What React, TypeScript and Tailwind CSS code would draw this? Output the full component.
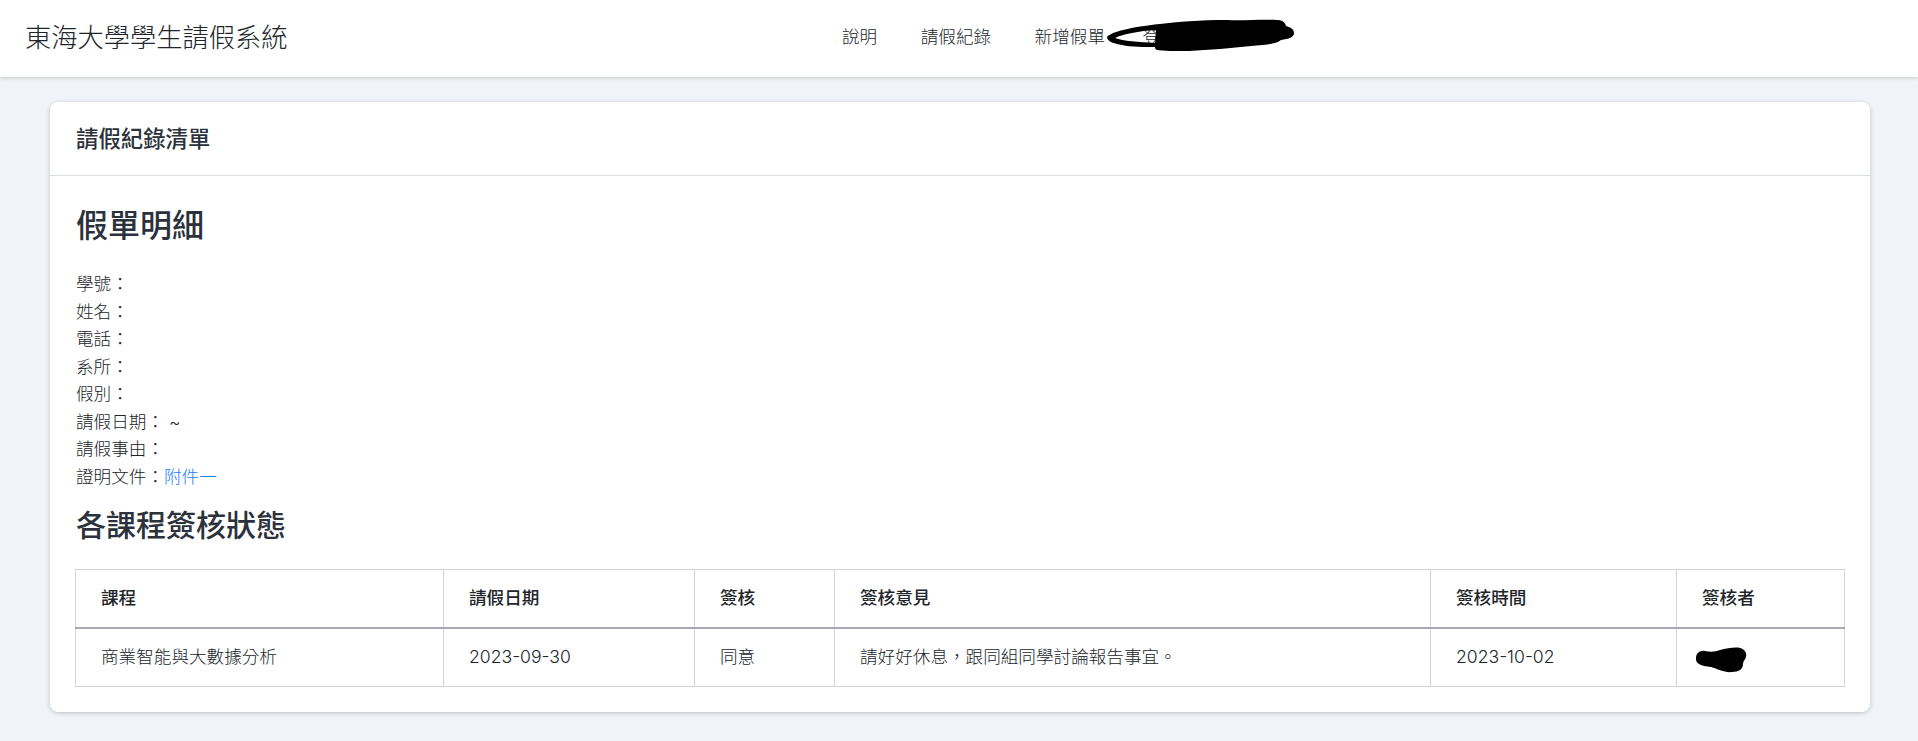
const fontStack = "font-['Inter','Noto_Sans_CJK_TC',sans-serif]";

const columns = [
  { title: '課程', width: 'w-[368px]' },
  { title: '請假日期', width: 'w-[251px]' },
  { title: '簽核', width: 'w-[140px]' },
  { title: '簽核意見', width: 'w-[596px]' },
  { title: '簽核時間', width: 'w-[246px]' },
  { title: '簽核者', width: 'w-[168px]' },
];

const details = ['學號：', '姓名：', '電話：', '系所：', '假別：', '請假日期： ~', '請假事由：'];

function NavScribble() {
  return (
    <svg className="absolute left-[1107px] top-[19px]" width="187" height="33" viewBox="0 0 187 33" fill="none">
      <path
        fillRule="evenodd"
        d="M0 18C4 13 24 8 53 5 70 3 93 1 120 1c16 1 34-1 50 0 5 0 8 2 9 6 4 1 8 3 8 7 0 4-5 6-13 7-4 4-16 5-30 6-20 2-42 4-62 5-13 0-26 0-32-1-2-1-2-2-2-3-10 0-24 0-33-2C3 24 0 21 0 18zM8 19c8 3 24 4 40 5l1-13C32 12 16 15 8 19z"
        fill="#000"
      />
    </svg>
  );
}

function SignerScribble() {
  return (
    <svg className="absolute left-[18px] top-[18px]" width="52" height="26" viewBox="0 0 52 26" fill="none">
      <path d="M1 11C1 6 5 3 10 4c5 1 10 1 15-1 7-2 16-3 20-2 5 1 7 6 6 9-1 3-3 4-3 7 0 5-4 8-11 8-7 1-14-3-21-5-5-1-9-1-12-3-2-1-3-3-3-5z" fill="#000" />
    </svg>
  );
}

export default function App() {
  return (
    <div className={`min-h-[741px] bg-[#f0f3f8] text-[17.6px] text-[#212529] ${fontStack}`}>
      <header className="relative flex h-[77px] items-center bg-white pb-[2px] pl-[25px] shadow-[0_1px_4px_rgba(0,0,0,0.18)]">
        <span className="w-[264px] text-[26.25px] font-extralight text-[#212529]">東海大學學生請假系統</span>
        <nav className="ml-[553px] flex gap-[43.5px] font-light">
          <a>說明</a>
          <a>請假紀錄</a>
          <a>新增假單</a>
          <a className="-ml-[6px]">登</a>
        </nav>
        <NavScribble />
      </header>

      <main className="pl-[50px] pr-[48px] pt-[25px] pb-[26px]">
        <section className="rounded-[8px] bg-white shadow-[0_1px_4px_rgba(0,0,0,0.22)]">
          <div className="flex h-[74px] items-center border-b border-[#dcdfe4] px-[26px]">
            <h5 className="text-[22.4px] font-medium text-[#2b323b]">請假紀錄清單</h5>
          </div>

          <div className="px-[25px] pt-[27px] pb-[25px]">
            <h3 className="pl-[1px] text-[32px] leading-[46px] font-medium text-[#2b323b]">假單明細</h3>
            <div className="mt-[21px] pl-[1px] leading-[27.5px] font-light">
              {details.map((line) => (
                <div key={line}>{line}</div>
              ))}
              <div>
                證明文件：<a className="text-[#1a7dff]">附件一</a>
              </div>
            </div>
            <h4 className="mt-[15px] mb-[24px] pl-[1px] text-[30px] leading-[40px] font-medium text-[#2b323b]">各課程簽核狀態</h4>

            <table className="w-[1769px] table-fixed border-collapse border border-[#d2d3dc]">
              <thead>
                <tr className="h-[58px] border-b-2 border-[#a9a9b4]">
                  {columns.map((col) => (
                    <th key={col.title} className={`${col.width} border-x border-[#d2d3dc] pl-[25px] text-left font-medium`}>
                      {col.title}
                    </th>
                  ))}
                </tr>
              </thead>
              <tbody className="font-light">
                <tr className="h-[59px]">
                  <td className="border-x border-[#d2d3dc] pl-[25px]">商業智能與大數據分析</td>
                  <td className="border-x border-[#d2d3dc] pl-[25px]">2023-09-30</td>
                  <td className="border-x border-[#d2d3dc] pl-[25px]">同意</td>
                  <td className="border-x border-[#d2d3dc] pl-[25px]">請好好休息，跟同組同學討論報告事宜。</td>
                  <td className="border-x border-[#d2d3dc] pl-[25px]">2023-10-02</td>
                  <td className="relative border-x border-[#d2d3dc] pl-[25px]">
                    <SignerScribble />
                  </td>
                </tr>
              </tbody>
            </table>
          </div>
        </section>
      </main>
    </div>
  );
}
